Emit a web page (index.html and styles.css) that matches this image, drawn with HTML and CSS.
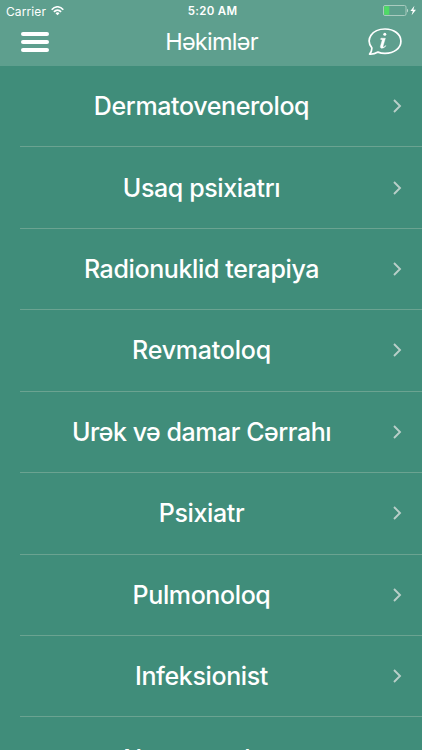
FILE: index.html
```
<!DOCTYPE html>
<html lang="az">
<head>
<meta charset="utf-8">
<title>Həkimlər</title>
<link rel="stylesheet" href="styles.css">
</head>
<body>
<header class="header">
  <div class="status">
    <div class="carrier"><span>Carrier</span>
      <svg width="13" height="10" viewBox="0 0 13 10" fill="none" stroke="#fff" stroke-width="1.6"><path d="M.7 3.7C4-.2 9-.2 12.3 3.7M2.900 5.900C5 3.500 8 3.500 10.100 5.900"/><path d="M6.500 9.300 4.500 7.200C5.700 6 7.300 6 8.500 7.200Z" fill="#fff" stroke="none"/></svg>
    </div>
    <span class="time">5:20 AM</span>
    <svg class="battery" width="36" height="12" viewBox="0 0 36 12"><rect x=".5" y=".5" width="22.500" height="10" rx="1.500" fill="none" stroke="#a9cbbf"/><path d="M1.200 1.200H6.300V9.800H1.200Z" fill="#4fdb65"/><path d="M24 3.700c1.400.2 1.400 3.400 0 3.600z" fill="#b9d6cc"/><path d="M31.400.7 27.400 6.100h2.400L28.600 10.300 33 4.700h-2.600z" fill="#fff"/></svg>
  </div>
  <nav class="nav">
    <div class="menu"><i></i><i></i><i></i></div>
    <h1>Həkimlər</h1>
    <svg class="info" width="36" height="30" viewBox="0 0 36 30"><path d="M4.800 20.800C-1.700 12.500 4.800 2 18 2c9.200 0 15.900 5.300 15.900 12.200S27.200 26.400 18 26.400c-2.700 0-5-.4-7-1.300-2.600 1.500-5.300 2.300-8.400 2.100 1.700-1.800 2.400-3.800 2.200-6.400z" fill="none" stroke="#fff" stroke-width="1.700" stroke-linejoin="round"/><circle cx="17.800" cy="7.300" r="1.500" fill="#fff"/><path d="M13.900 11.200h4.500l-2.400 8c-.3 1.200.9.900 2.900-.8-1 2.800-6.100 4.200-5.500.8l1.900-6.500-1.700-.3z" fill="#fff" stroke="#fff" stroke-width=".4"/></svg>
  </nav>
</header>
<main class="list">
  <div class="row"><span class="name">Dermatoveneroloq</span><svg class="chevron" viewBox="0 0 9 14"><path d="m1 1 6 6-6 6"/></svg></div>
  <div class="row"><span class="name">Usaq psixiatrı</span><svg class="chevron" viewBox="0 0 9 14"><path d="m1 1 6 6-6 6"/></svg></div>
  <div class="row"><span class="name">Radionuklid terapiya</span><svg class="chevron" viewBox="0 0 9 14"><path d="m1 1 6 6-6 6"/></svg></div>
  <div class="row"><span class="name wide">Revmatoloq</span><svg class="chevron" viewBox="0 0 9 14"><path d="m1 1 6 6-6 6"/></svg></div>
  <div class="row"><span class="name tight">Urək və damar Cərrahı</span><svg class="chevron" viewBox="0 0 9 14"><path d="m1 1 6 6-6 6"/></svg></div>
  <div class="row"><span class="name">Psixiatr</span><svg class="chevron" viewBox="0 0 9 14"><path d="m1 1 6 6-6 6"/></svg></div>
  <div class="row"><span class="name">Pulmonoloq</span><svg class="chevron" viewBox="0 0 9 14"><path d="m1 1 6 6-6 6"/></svg></div>
  <div class="row"><span class="name">Infeksionist</span><svg class="chevron" viewBox="0 0 9 14"><path d="m1 1 6 6-6 6"/></svg></div>
  <div class="row last"><span class="name tight">Nevropatoloq</span><svg class="chevron" viewBox="0 0 9 14"><path d="m1 1 6 6-6 6"/></svg></div>
</main>
</body>
</html>
```
FILE: styles.css
```
* { box-sizing: border-box; }
body {
  margin: 0;
  height: 750px;
  overflow: hidden;
  display: flex;
  flex-direction: column;
  background: #408d7a;
  color: #fff;
  font-family: Inter, "Liberation Sans", sans-serif;
}
.header { flex: none; height: 66px; background: #5e9f8e; }
.status {
  height: 22px;
  padding: 0 3px 0 6px;
  display: grid;
  grid-template-columns: 1fr auto 1fr;
  align-items: center;
  font-size: 12px;
}
.carrier { display: flex; align-items: center; gap: 5px; letter-spacing: .1px; }
.time { font-weight: 600; font-size: 11.500px; letter-spacing: .3px; }
.battery { justify-self: end; }
.nav {
  height: 40px;
  padding: 0 20px 0 21px;
  display: grid;
  grid-template-columns: 1fr auto 1fr;
  align-items: center;
}
.menu { width: 28px; display: grid; gap: 4px; }
.menu i { height: 4.300px; border-radius: 2px; background: #fff; }
h1 { margin: 0; font-size: 23.500px; font-weight: 400; line-height: 30px; letter-spacing: -.75px; }
.info { justify-self: end; margin-right: -1px; }
.list { flex: 1; min-height: 0; overflow: hidden; }
.row {
  height: 81.430px;
  margin-left: 20px;
  padding: 0 20px 0 0;
  border-bottom: 1px solid #6ba391;
  display: grid;
  grid-template-columns: 363px 1fr;
  align-items: center;
}
.row.last { padding-top: 3px; }
.name { text-align: center; white-space: nowrap; font-size: 25px; font-weight: 500; line-height: 32px; letter-spacing: -.38px; }
.name.wide { letter-spacing: -.2px; }
.name.tight { letter-spacing: -.46px; }
.chevron { justify-self: end; width: 9px; height: 14px; fill: none; stroke: #b9cfc9; stroke-width: 1.900; }
```
